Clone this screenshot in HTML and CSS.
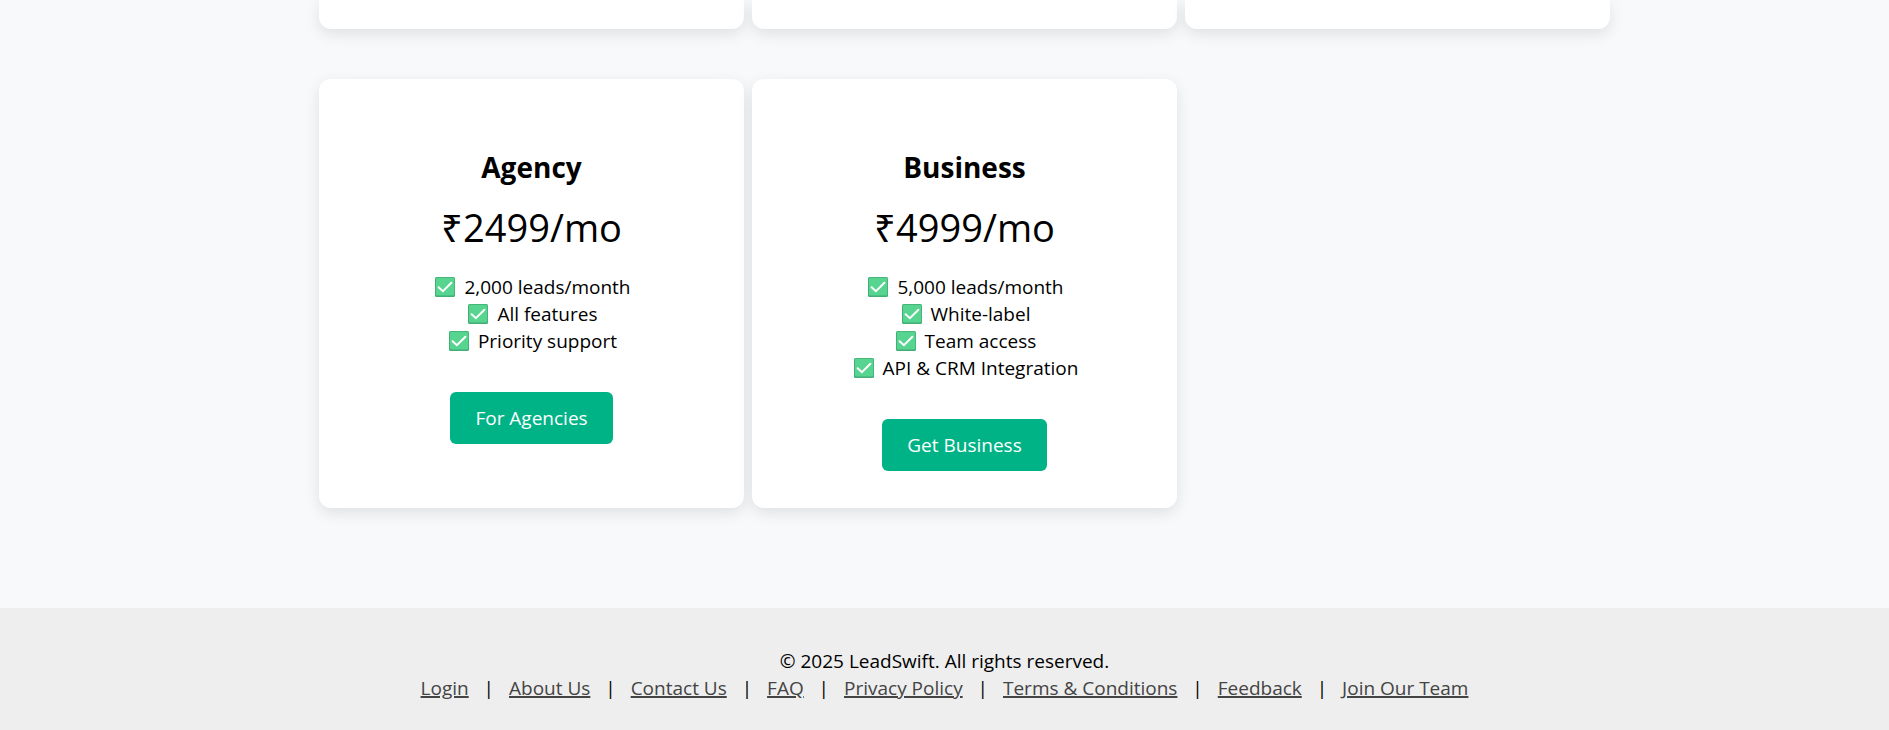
FILE: index.html
```html
<!DOCTYPE html>
<html lang="en">
<head>
    <meta charset="UTF-8">
    <meta name="viewport" content="width=device-width, initial-scale=1.0">
    <title>LeadSwift</title>
    <link rel="stylesheet" href="styles.css">
</head>
<body>
    <!-- check icon shared by the feature lists -->
    <svg class="sprite" aria-hidden="true">
        <symbol id="check" viewBox="0 0 20 20">
            <rect width="20" height="20" rx="1.5" fill="#42ad75"/>
            <rect x="1" y="0.8" width="18.2" height="17.8" rx="1" fill="#57d48f"/>
            <path d="M3.6 10.2 L7.9 14.2 L16.4 5.7" fill="none" stroke="#fff" stroke-width="2" stroke-linecap="round"/>
        </symbol>
    </svg>

    <main class="pricing">
        <div class="card card-end"></div>
        <div class="card card-end"></div>
        <div class="card card-end"></div>

        <div class="card">
            <h3>Agency</h3>
            <p class="price">₹2499/mo</p>
            <ul>
                <li><svg class="check"><use href="#check"/></svg> 2,000 leads/month</li>
                <li><svg class="check"><use href="#check"/></svg> All features</li>
                <li><svg class="check"><use href="#check"/></svg> Priority support</li>
            </ul>
            <button class="btn" type="button">For Agencies</button>
        </div>

        <div class="card">
            <h3>Business</h3>
            <p class="price">₹4999/mo</p>
            <ul>
                <li><svg class="check"><use href="#check"/></svg> 5,000 leads/month</li>
                <li><svg class="check"><use href="#check"/></svg> White-label</li>
                <li><svg class="check"><use href="#check"/></svg> Team access</li>
                <li><svg class="check"><use href="#check"/></svg> API &amp; CRM Integration</li>
            </ul>
            <button class="btn" type="button">Get Business</button>
        </div>
    </main>

    <footer>
        <p>© 2025 LeadSwift. All rights reserved.</p>
        <nav>
            <a href="#">Login</a> |
            <a href="#">About Us</a> |
            <a href="#">Contact Us</a> |
            <a href="#">FAQ</a> |
            <a href="#">Privacy Policy</a> |
            <a href="#">Terms &amp; Conditions</a> |
            <a href="#">Feedback</a> |
            <a href="#">Join Our Team</a>
        </nav>
    </footer>
</body>
</html>
```
FILE: styles.css
```css
* {
    box-sizing: border-box;
}

body {
    margin: 0;
    font-family: 'Segoe UI', 'Open Sans', sans-serif;
    font-size: 19px;
    line-height: 27px;
    color: #000;
    background: #f8f9fb;
}

.sprite {
    display: none;
}

/* Pricing cards */
.pricing {
    display: grid;
    grid-template-columns: repeat(3, 1fr);
    column-gap: 8px;
    row-gap: 50px;
    max-width: 1331px;
    margin: 0 auto;
    padding: 0 0 100px 40px;
}

.card {
    background: #fff;
    border-radius: 12px;
    box-shadow: 0 5px 15px rgba(0, 0, 0, 0.1);
    padding: 68px 38px 37px;
    text-align: center;
}

.card-end {
    height: 29px;
    padding: 0;
    border-radius: 0 0 12px 12px;
}

.card h3 {
    margin: 0 0 14px;
    font-size: 28px;
    line-height: 40px;
}

.price {
    margin: 0 0 20px;
    font-size: 38px;
    line-height: 53px;
}

.card ul {
    list-style: none;
    margin: 0 0 37px;
    padding: 0;
}

.check {
    width: 20px;
    height: 20px;
    margin: 0 4px 0 3px;
    vertical-align: -3px;
}

.card li {
    height: 27px;
}

.btn {
    display: inline-block;
    padding: 13px 25px 12px;
    border: none;
    border-radius: 6px;
    background: #00b386;
    color: #fff;
    font: inherit;
    cursor: pointer;
}

.btn:hover {
    background: #009970;
}

/* Footer */
footer {
    background: #eee;
    padding: 40px 20px 28px;
    text-align: center;
}

footer p {
    margin: 0;
}

footer a {
    margin: 0 10px;
    color: #444;
    text-decoration-thickness: 2px;
}
```
